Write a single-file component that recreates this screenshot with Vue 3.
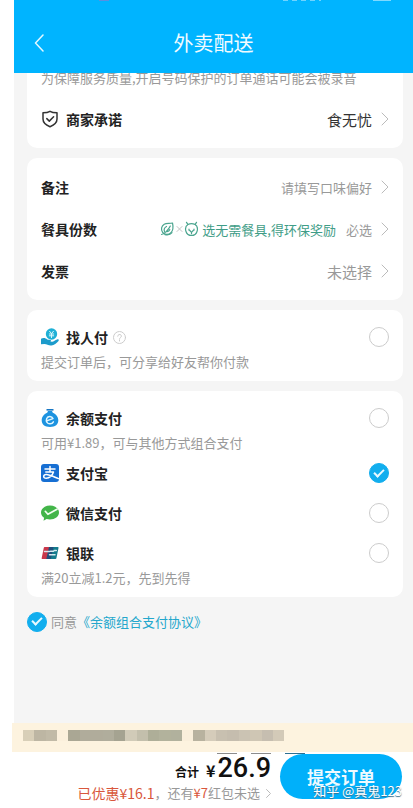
<script setup>
import { ref } from 'vue'

const pay = ref('alipay')
const agreed = ref(true)
const mosaic = [
  '#d8cfb8', '#bdb6a3', '#c1baa7', '#fbf0dc', '#aaa794', '#b0ac9b', '#b0ac9b', '#b0ad9c',
  '#a5a391', '#d1cbb8', '#c3bfac', '#aeae98', '#b2b29c', '#b1b19d', '#faefdb', '#b8b29f',
  '#d5ccba', '#c8c0b0', '#c5bdae', '#cbc3b3', '#cfc6b4', '#c6beb0', '#d3cab8',
]
</script>

<template>
  <div class="page">
    <header class="top">
      <div class="status" aria-hidden="true">
        <i class="dot"></i><i class="bits"></i><i class="battery"></i>
      </div>
      <button class="back" type="button" aria-label="返回">
        <svg width="10" height="18" viewBox="0 0 10 18"><path d="M9 1 1.500 9 9 17" /></svg>
      </button>
      <h1>外卖配送</h1>
    </header>

    <main>
      <section class="card first">
        <p class="note">为保障服务质量,开启号码保护的订单通话可能会被录音</p>
        <button class="row" type="button">
          <svg class="shield" width="18" height="18" viewBox="0 0 18 18">
            <path d="M9 1.300C11 2.500 13.500 2.700 16 2.700V9c0 3.700-2.700 6-7 7.700C4.700 15 2 12.700 2 9V2.700C4.500 2.700 7 2.500 9 1.300Z" />
            <path d="m5.800 8.600 2.500 2.500 4.300-4.300" />
          </svg>
          <strong>商家承诺</strong>
          <span class="value large dark">食无忧</span>
          <svg class="chev" width="8" height="14" viewBox="0 0 8 14"><path d="m1 1 6 6-6 6" /></svg>
        </button>
      </section>

      <section class="card">
        <button class="row" type="button">
          <strong>备注</strong>
          <span class="value">请填写口味偏好</span>
          <svg class="chev" width="8" height="14" viewBox="0 0 8 14"><path d="m1 1 6 6-6 6" /></svg>
        </button>
        <button class="row" type="button">
          <strong>餐具份数</strong>
          <span class="value eco">
            <svg width="38" height="16" viewBox="0 0 38 16">
              <path d="M12.500 2c.8 3.500.5 7.500-1.500 9.700-2.400 2.600-6.600 2.200-8.400-.3C.6 8.500 1.400 5 4.200 3.300 6.500 1.900 9.500 2.800 12.500 2Z" />
              <path d="M1.500 13.500C4 13 8.500 9 10.300 5M4.500 10.500c-.8-2 .2-4 2-5M6.500 10.500c1.500.2 2.800-.5 3.300-2M5 13.700c3 .6 5.500 0 7-2" />
              <path class="times" d="m17 5.500 5 5m0-5-5 5" />
              <path d="M28 3.600C25.700 5 25 7.500 26 10.500c.8 2.600 3 4 5.500 4s4.700-1.400 5.500-4c1-3 .3-5.500-2-6.900-2-1.200-5-1.200-7 0ZM28 3.600 26.500 1.300M35 3.600l1.500-2.300M29 8.200v1M34 8.200v1M29.800 9.500l1.700 1.800 1.700-1.800M31.500 11.300v1.500" />
            </svg>
            <span>选无需餐具,得环保奖励</span>
          </span>
          <span class="must">必选</span>
          <svg class="chev" width="8" height="14" viewBox="0 0 8 14"><path d="m1 1 6 6-6 6" /></svg>
        </button>
        <button class="row" type="button">
          <strong>发票</strong>
          <span class="value large">未选择</span>
          <svg class="chev" width="8" height="14" viewBox="0 0 8 14"><path d="m1 1 6 6-6 6" /></svg>
        </button>
      </section>

      <section class="card options">
        <div class="option with-sub">
          <label class="line">
            <svg class="logo" width="18" height="18" viewBox="0 0 18 18">
              <circle cx="10.500" cy="6" r="5.700" fill="#1fb0d6" />
              <path d="m8.600 3.300 1.900 2.300 1.900-2.300M8.300 6h4.400M8.300 7.800h4.400M10.500 5.600v4" fill="none" stroke="#d9f6fb" stroke-width="1" />
              <path d="M0 10.800c2.300-1.300 4.600-.8 6.200.7l2.900.4c1.400.2 1.200 1.700 0 1.700l2 .1c1.500-.3 3.300-1.600 4.900-2.300 1.300-.5 2.400.4 1.500 1.500-1.700 2-4.500 4.200-7 4.600-2.700.4-4.700-1.300-7-1.400L0 16.300Z" fill="#1c9bcb" />
            </svg>
            <strong>找人付</strong>
            <svg class="help" width="13" height="13" viewBox="0 0 13 13">
              <circle cx="6.500" cy="6.500" r="6" />
              <path d="M4.700 5.200c0-2.400 3.700-2.300 3.700-.1 0 1.400-1.900 1.400-1.900 2.900M6.500 9v1" />
            </svg>
            <input v-model="pay" type="radio" name="pay" value="friend" />
          </label>
          <p>提交订单后，可分享给好友帮你付款</p>
        </div>
      </section>

      <section class="card options">
        <div class="option with-sub">
          <label class="line">
            <svg class="logo" width="18" height="18" viewBox="0 0 18 18">
              <path d="M5.500 0h7v1.600h-7Z" fill="#1777c4" />
              <path d="M7 2h4l.8 1.800C15 5 17.300 8 17.300 11.300c0 4.300-3 6.700-8.300 6.700S.7 15.600.7 11.300C.7 8 3 5 6.200 3.800Z" fill="#1d93e0" />
              <path d="m6.300 11.600 5.700-2C10.800 6.800 7 6.800 5.700 9.500c-1.200 2.900.8 5.500 3.500 5.300 1.500-.1 2.500-.8 3.200-2" fill="none" stroke="#e2f6ff" stroke-width="1.500" />
            </svg>
            <strong>余额支付</strong>
            <input v-model="pay" type="radio" name="pay" value="balance" />
          </label>
          <p>可用¥1.89，可与其他方式组合支付</p>
        </div>
        <div class="option">
          <label class="line">
            <svg class="logo" width="18" height="18" viewBox="0 0 18 18">
              <rect width="18" height="18" rx="3" fill="#176fd3" />
              <path d="M4 5h10M9 2.500V8M4.800 8h7.700c-1 3.200-4 6.300-7.300 6.300-3.400 0-3.300-3.700.1-3.700 3.300 0 7.500 2.200 12.200 4" fill="none" stroke="#fff" stroke-width="1.500" />
            </svg>
            <strong>支付宝</strong>
            <input v-model="pay" type="radio" name="pay" value="alipay" />
          </label>
        </div>
        <div class="option">
          <label class="line">
            <svg class="logo" width="18" height="18" viewBox="0 0 18 18">
              <path d="M9 1.500c5 0 9 3 9 7s-4 7-9 7c-1.200 0-2.400-.2-3.400-.5L2.500 16.700l.6-3C1.200 12.400 0 10.600 0 8.500c0-4 4-7 9-7Z" fill="#43b549" />
              <path d="m4.300 7.300 2.600 3L16 5.200" fill="none" stroke="#f2fff0" stroke-width="1.700" />
            </svg>
            <strong>微信支付</strong>
            <input v-model="pay" type="radio" name="pay" value="wechat" />
          </label>
        </div>
        <div class="option with-sub">
          <label class="line">
            <svg class="logo" width="18" height="18" viewBox="0 0 18 18">
              <path d="M3.600 3H9L6.300 15H1.500C.8 15 .5 14.600.7 14L2.800 3.800C2.900 3.300 3.200 3 3.600 3Z" fill="#c9374b" />
              <path d="M8 3h5.500l-2.700 12H5.300Z" fill="#204f7c" />
              <path d="M12.500 3h4.200c.6 0 .9.400.8 1l-2.100 10.200c-.1.500-.4.800-1 .8H9.800Z" fill="#147b8c" />
              <path d="M3.500 7.500h2M6.500 7.500h2M9.500 7.300h3M13.300 6.500h2M8.500 10.800h2M11.300 10.800H14" stroke="#d7e9ee" stroke-width="1.500" />
            </svg>
            <strong>银联</strong>
            <input v-model="pay" type="radio" name="pay" value="unionpay" />
          </label>
          <p>满20立减1.2元，先到先得</p>
        </div>
      </section>

      <div class="agree">
        <input id="agree" v-model="agreed" type="checkbox" />
        <label for="agree">同意</label>
        <a href="#">《余额组合支付协议》</a>
      </div>
    </main>

    <div class="banner" aria-hidden="true">
      <i v-for="(c, i) in mosaic" :key="i" :style="{ background: c }"></i>
    </div>

    <footer>
      <div class="edge" aria-hidden="true"><i></i><i></i><i class="blue"></i></div>
      <div class="sum">
        <div class="total"><span>合计</span><span class="yen">¥</span><b>26.9</b></div>
        <a class="saved" href="#">
          <span class="red">已优惠¥16.1</span><span>，还有<em>¥7</em>红包未选</span>
          <svg class="chev" width="5" height="9" viewBox="0 0 5 9"><path d="m.5.5 4 4-4 4" /></svg>
        </a>
      </div>
      <button class="submit" type="button">提交订单</button>
      <span class="mark">知乎 @真鬼123</span>
    </footer>
  </div>
</template>

<style>
body {
  background: #fff;
}
</style>

<style scoped>
.page {
  display: flex;
  flex-direction: column;
  min-height: 100vh;
  margin-left: 14px;
  background: #f5f5f5;
  color: #222;
  font-family: "Noto Sans CJK SC", sans-serif;
  font-size: 13px;
}
h1,
p {
  margin: 0;
  font-weight: 400;
}
button,
input {
  margin: 0;
  padding: 0;
  border: 0;
  background: none;
  color: inherit;
  font: inherit;
}
svg {
  flex: none;
  fill: none;
  stroke-linecap: round;
  stroke-linejoin: round;
}
.top {
  position: sticky;
  top: 0;
  z-index: 1;
  display: grid;
  grid-template-columns: 50px 1fr 50px;
  grid-template-rows: 12px 61px;
  align-items: center;
  background: #00b4ff;
  color: #f0fbff;
}
.status {
  grid-column: 1 / -1;
  align-self: start;
  display: flex;
  justify-content: flex-end;
  gap: 52px;
  padding-right: 22px;
}
.status i {
  height: 1px;
  background: #7fd9ff;
}
.status .dot {
  width: 10px;
  margin-right: auto;
  margin-left: 85px;
  background: #5a8fe0;
}
.status .bits {
  width: 38px;
  background: repeating-linear-gradient(90deg, #6fd3ff 0 5px, #00b4ff 5px 9px);
}
.status .battery {
  width: 18px;
}
.back {
  display: flex;
  height: 44px;
  align-items: center;
  padding-left: 20px;
}
.back svg {
  stroke: #e4f8ff;
  stroke-width: 1.5;
}
h1 {
  font-size: 20px;
  line-height: 28px;
  text-align: center;
}
main {
  flex: 1;
  display: flex;
  flex-direction: column;
  gap: 10px;
  margin-top: -15px;
  padding: 0 10px 20px 13px;
}
.card {
  padding: 8px 14px;
  border-radius: 10px;
  background: #fff;
}
.note {
  padding: 2px 0 10px;
  color: #999;
  line-height: 20px;
  white-space: nowrap;
}
.row {
  display: flex;
  align-items: center;
  width: 100%;
  height: 42px;
  text-align: left;
}
strong {
  font-size: 14px;
  font-weight: 700;
}
.shield {
  margin-right: 7px;
  stroke: #333;
  stroke-width: 1.5;
}
.value {
  margin-left: auto;
  color: #999;
}
.large {
  font-size: 15px;
}
.dark {
  color: #333;
}
.chev {
  margin-left: 9px;
  stroke: #bbb;
  stroke-width: 1;
}
.eco {
  display: flex;
  align-items: center;
  gap: 4px;
  color: #3f9d87;
}
.eco svg {
  stroke: #4ba58f;
  stroke-width: 1.2;
}
.eco .times {
  stroke: #c4c4c4;
  stroke-width: 1;
}
.must {
  margin-left: 10px;
  color: #999;
}
.options {
  padding: 12px 14px 4px;
}
.option {
  padding-bottom: 10px;
}
.with-sub {
  padding-bottom: 5px;
}
.line {
  display: flex;
  align-items: center;
  height: 30px;
}
.logo {
  margin-right: 7px;
}
.help {
  margin-left: 5px;
  stroke: #ccc;
}
.option p {
  color: #999;
  line-height: 20px;
}
input {
  flex: none;
  display: grid;
  place-items: center;
  box-sizing: border-box;
  width: 20px;
  height: 20px;
  border: 1px solid #ccc;
  border-radius: 50%;
  appearance: none;
}
.line input {
  margin-left: auto;
}
input:checked {
  border-color: #12aeee;
  background: #12aeee;
}
input:checked::after {
  content: "";
  width: 8px;
  height: 4px;
  margin-bottom: 3px;
  border: solid #eafaff;
  border-width: 0 0 2px 2px;
  transform: rotate(-45deg);
}
.agree {
  display: flex;
  align-items: center;
  height: 29px;
  color: #999;
}
.agree label {
  margin-left: 4px;
}
.agree a {
  color: #23a7cc;
  text-decoration: none;
}
.banner {
  display: flex;
  height: 11px;
  margin-left: -2px;
  padding: 7px 11px 11px;
  background: #fdf3df;
}
.banner i {
  flex: 0 1 3%;
}
footer {
  position: relative;
  display: flex;
  justify-content: flex-end;
  align-items: flex-start;
  gap: 9px;
  padding: 2px 11px 5px;
  background: #fff;
}
.edge {
  position: absolute;
  top: 1px;
  right: 108px;
  display: flex;
  gap: 14px;
}
.edge i {
  width: 20px;
  height: 1px;
  background: #8c8c8c;
}
.edge .blue {
  background: #2f6f8f;
}
.sum {
  display: flex;
  flex-direction: column;
  align-items: flex-end;
}
.total {
  display: flex;
  align-items: baseline;
  height: 29px;
  color: #111;
  font-size: 12px;
  font-weight: 700;
  line-height: 28px;
}
.yen {
  margin: 0 2px 0 7px;
  font-size: 16px;
}
.total b {
  font-family: Roboto, sans-serif;
  font-size: 27px;
  font-weight: 500;
}
.saved {
  display: flex;
  align-items: center;
  color: #999;
  line-height: 20px;
  text-decoration: none;
}
.saved .red {
  font-size: 14px;
}
.red,
em {
  color: #d9573c;
  font-style: normal;
}
.saved .chev {
  margin-left: 6px;
}
.submit {
  width: 122px;
  height: 45px;
  border-radius: 23px;
  background: #00b0fa;
  color: #eefaff;
  font-size: 17px;
  font-weight: 700;
}
.mark {
  position: absolute;
  right: 11px;
  bottom: 7px;
  color: #fff;
  font-size: 13px;
  line-height: 20px;
  text-shadow: 0 1px 1px #3c6f8c;
}
</style>
